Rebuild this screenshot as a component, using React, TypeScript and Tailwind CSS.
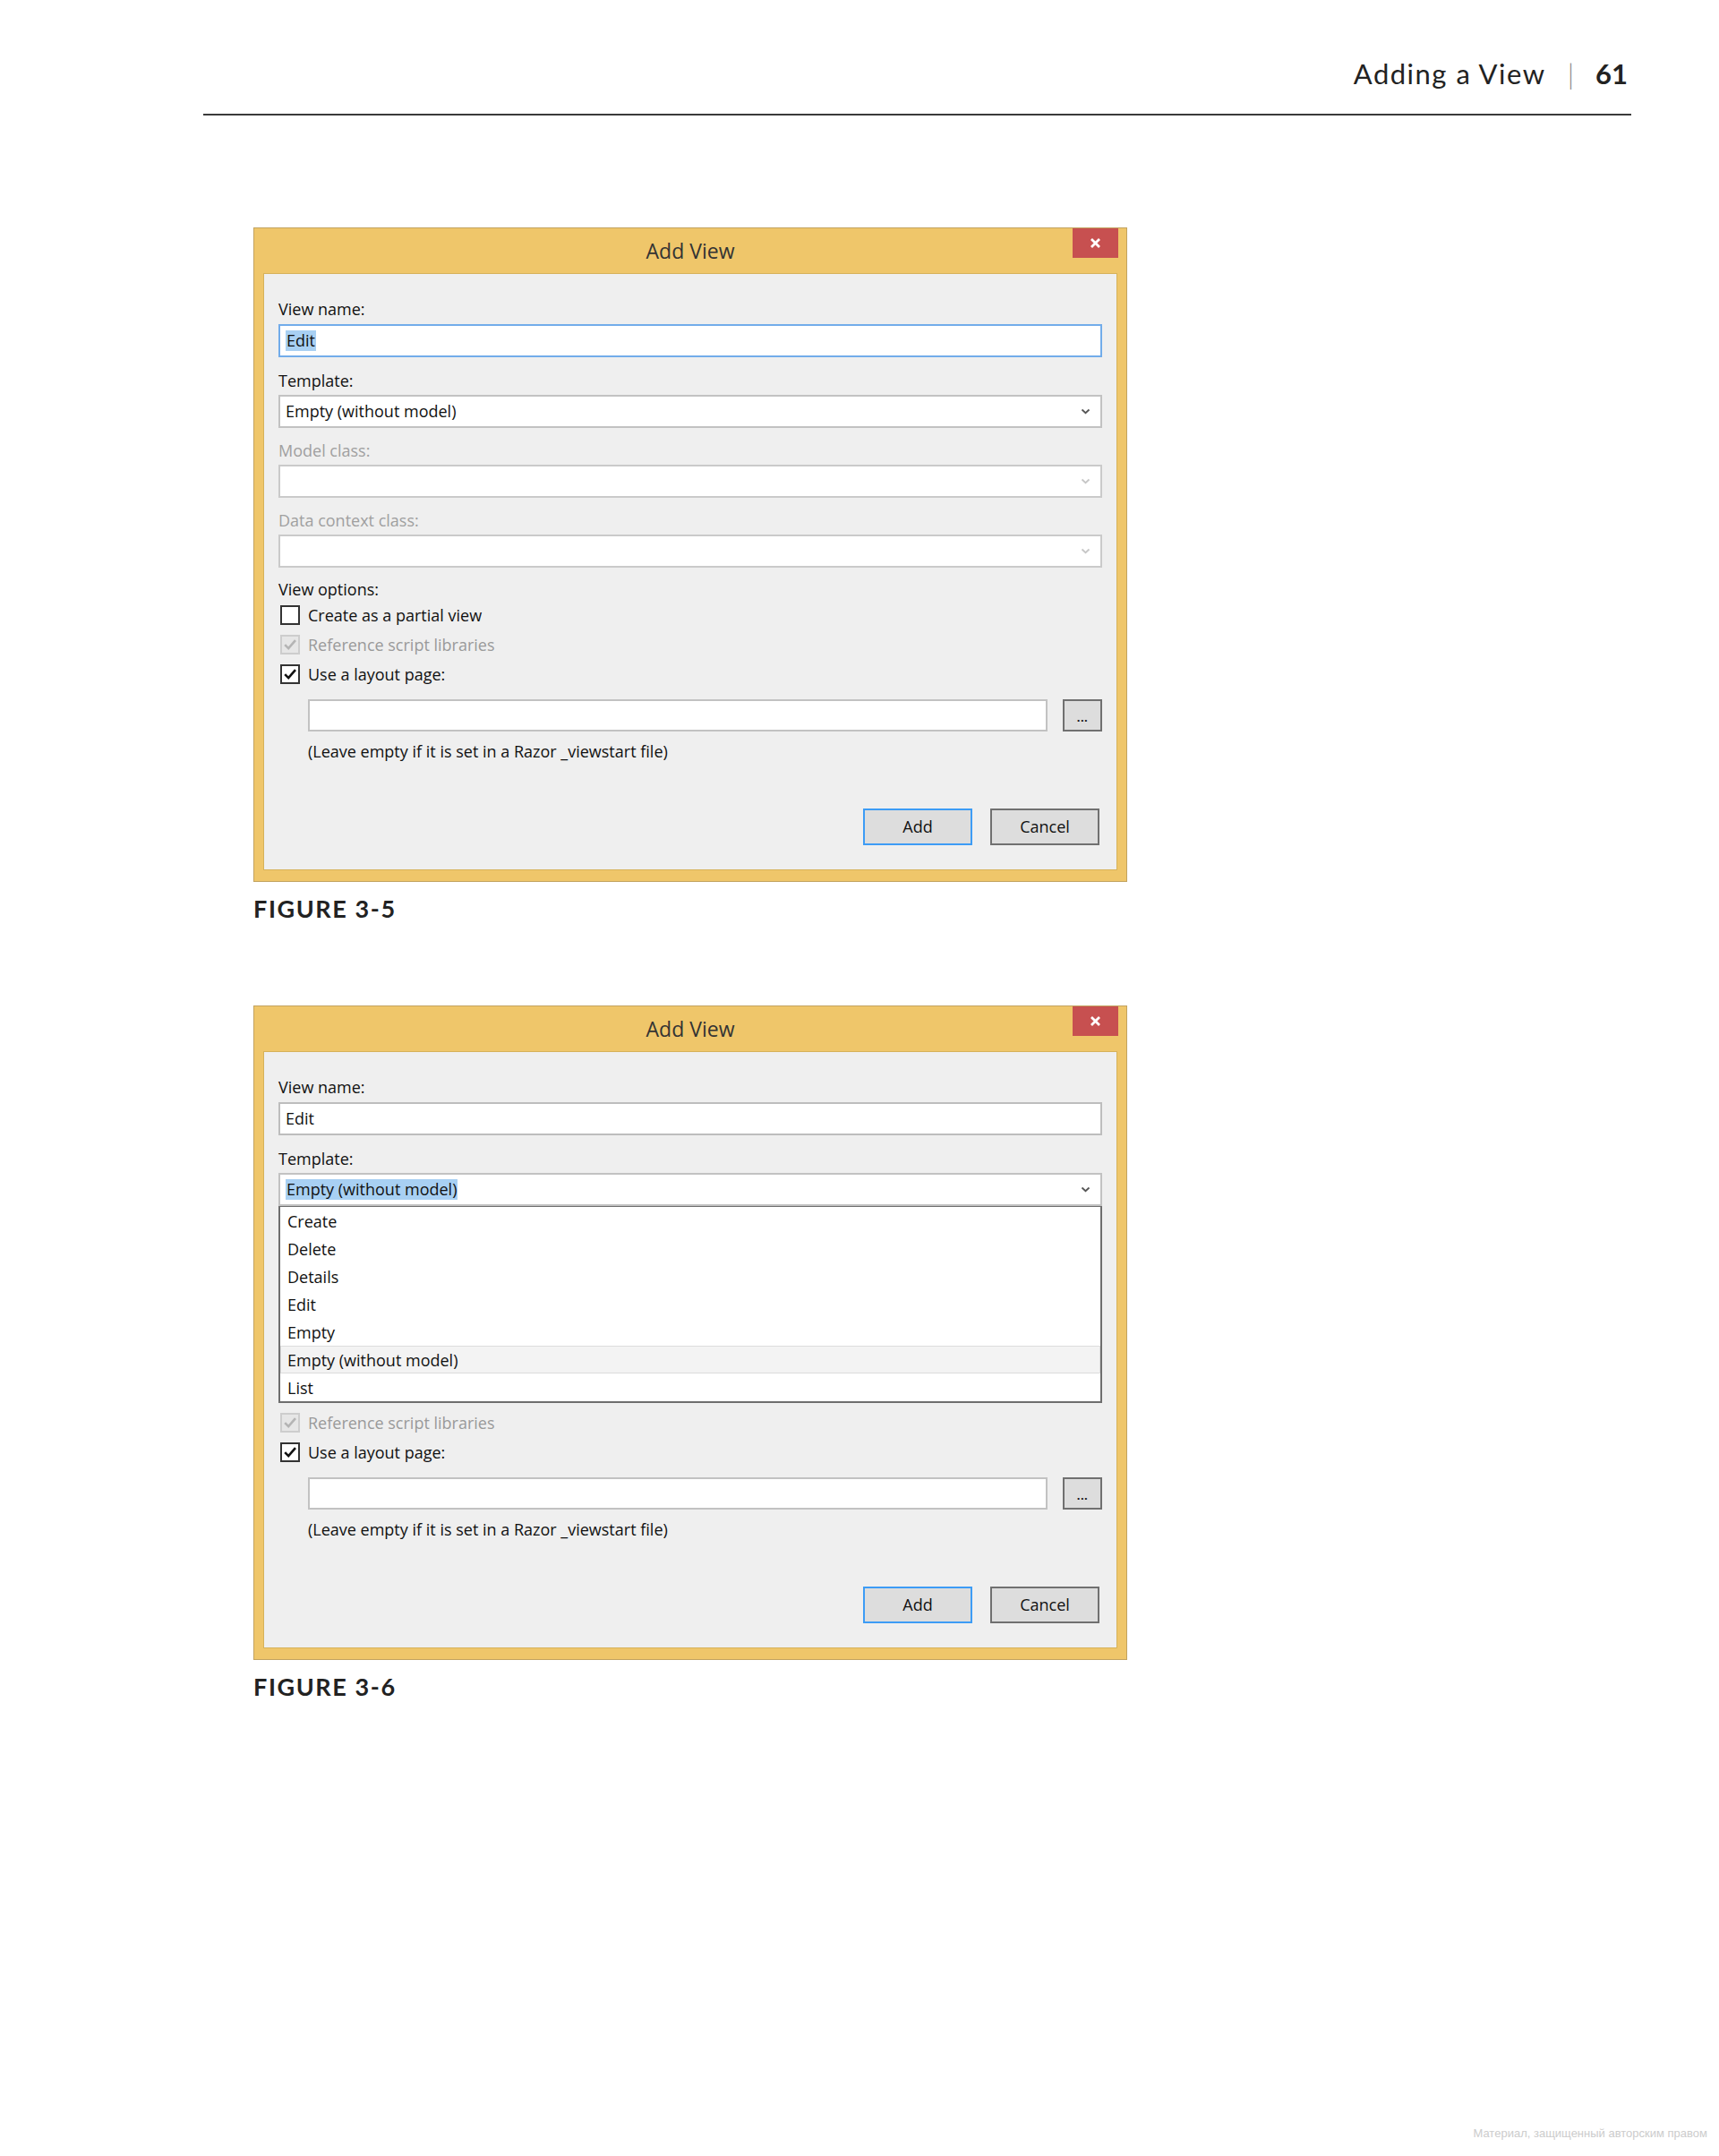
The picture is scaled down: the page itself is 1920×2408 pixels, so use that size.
import React from "react";

function Chevron({ light }: { light?: boolean }) {
  return (
    <svg width="11" height="7" viewBox="0 0 11 7" className="shrink-0">
      <path
        d="M1.5 1.5 L5.5 5.2 L9.5 1.5"
        fill="none"
        stroke={light ? "#c6c6c6" : "#555555"}
        strokeWidth="1.8"
      />
    </svg>
  );
}

function CheckMark({ color }: { color: string }) {
  return (
    <svg width="16" height="14" viewBox="0 0 16 14">
      <path d="M2.2 7.2 L6.2 11.2 L14 2.2" fill="none" stroke={color} strokeWidth="2.6" />
    </svg>
  );
}

type CbState = "unchecked" | "checked" | "disabled";

function CheckRow({ state, label, hidden }: { state: CbState; label: string; hidden?: boolean }) {
  const box =
    state === "disabled"
      ? "border-[#cdcdcd] bg-[#e6e6e6]"
      : "border-[#333333] bg-white";
  return (
    <div className={`flex items-center h-[33px] ${hidden ? "invisible" : ""}`}>
      <div className={`ml-[2px] w-[22px] h-[22px] border-2 flex items-center justify-center ${box}`}>
        {state === "checked" && <CheckMark color="#111111" />}
        {state === "disabled" && <CheckMark color="#b4b4b4" />}
      </div>
      <span
        className={`ml-[9px] leading-[24px] ${state === "disabled" ? "text-[#9a9a9a]" : "text-[#111111]"}`}
      >
        {label}
      </span>
    </div>
  );
}

const listItems = ["Create", "Delete", "Details", "Edit", "Empty", "Empty (without model)", "List"];

function Dialog({ open }: { open: boolean }) {
  const covered = open ? "invisible" : "";
  return (
    <div className="w-[976px] border border-[#c2a35f] bg-[#efc66a] relative">
      <div className="h-[50px] flex items-center justify-center relative">
        <span className="font-['Open_Sans',sans-serif] text-[23px] text-[#333333] leading-[30px]">Add View</span>
        <div className="absolute top-0 right-[9px] w-[51px] h-[33px] bg-[#c75050] flex items-center justify-center">
          <svg width="13" height="13" viewBox="0 0 13 13">
            <path d="M2 2 L11 11 M11 2 L2 11" stroke="#ffffff" strokeWidth="2.8" />
          </svg>
        </div>
      </div>
      <div className="mx-[10px] mb-[12px] border border-[#d6b25a] bg-[#efefef] px-[16px] pt-[27px] pb-[27px] font-['Open_Sans',sans-serif] text-[18px] text-[#111111]">
        <div className="h-[24px] leading-[24px]">View name:</div>
        <div
          className={`mt-[5px] h-[37px] bg-white border-2 flex items-center pl-[6px] ${
            open ? "border-[#bdbdbd]" : "border-[#72acea]"
          }`}
        >
          <span className={`leading-[23px] ${open ? "" : "bg-[#a8d0f3] px-[1px]"}`}>Edit</span>
        </div>

        <div className="mt-[14px] h-[24px] leading-[24px]">Template:</div>
        <div className="relative mt-[4px]">
          <div className="h-[37px] bg-white border-2 border-[#c2c2c2] flex items-center justify-between pl-[6px] pr-[11px]">
            <span className={`leading-[23px] ${open ? "bg-[#a8d0f3] px-[1px]" : ""}`}>Empty (without model)</span>
            <Chevron />
          </div>
          {open && (
            <div className="absolute left-0 right-0 top-full z-10 bg-white border-x-2 border-b-2 border-t border-[#6e6e6e]">
              {listItems.map((item, i) => (
                <div
                  key={item}
                  className={`h-[31px] flex items-center pl-[7px] border ${
                    i === 5 ? "bg-[#f3f3f3] border-[#dcdcdc]" : "border-transparent"
                  }`}
                >
                  <span className="leading-[24px]">{item}</span>
                </div>
              ))}
            </div>
          )}
        </div>

        <div className={`mt-[13px] h-[24px] leading-[24px] text-[#a0a0a0] ${covered}`}>Model class:</div>
        <div className={`mt-[4px] h-[37px] bg-white border-2 border-[#cacaca] flex items-center justify-end pr-[11px] ${covered}`}>
          <Chevron light />
        </div>

        <div className={`mt-[13px] h-[24px] leading-[24px] text-[#a0a0a0] ${covered}`}>Data context class:</div>
        <div className={`mt-[4px] h-[37px] bg-white border-2 border-[#cacaca] flex items-center justify-end pr-[11px] ${covered}`}>
          <Chevron light />
        </div>

        <div className={`mt-[12px] h-[24px] leading-[24px] ${covered}`}>View options:</div>
        <div className="flex flex-col">
          <CheckRow state="unchecked" label="Create as a partial view" hidden={open} />
          <CheckRow state="disabled" label="Reference script libraries" />
          <CheckRow state="checked" label="Use a layout page:" />
        </div>

        <div className="mt-[12px] ml-[33px] flex items-center gap-[17px]">
          <div className="flex-1 h-[36px] bg-white border-2 border-[#c2c2c2]" />
          <div className="w-[44px] h-[36px] border-2 border-[#707070] bg-[#dddddd] flex items-center justify-center">
            <span className="text-[13px] leading-[13px] font-bold mt-[4px] tracking-[0.5px]">...</span>
          </div>
        </div>
        <div className="mt-[10px] ml-[33px] h-[24px] leading-[24px]">
          (Leave empty if it is set in a Razor _viewstart file)
        </div>

        <div className="mt-[52px] flex justify-end gap-[20px] pr-[3px]">
          <div className="w-[122px] h-[41px] border-2 border-[#3d9cf5] bg-[#dddddd] flex items-center justify-center">
            Add
          </div>
          <div className="w-[122px] h-[41px] border-2 border-[#707070] bg-[#dddddd] flex items-center justify-center">
            Cancel
          </div>
        </div>
      </div>
    </div>
  );
}

function FigureLabel({ text }: { text: string }) {
  return (
    <div className="mt-[14px] font-['Lato',sans-serif] font-bold text-[27px] leading-[32px] tracking-[1.6px] text-[#222222]">
      {text}
    </div>
  );
}

export default function App() {
  return (
    <div className="relative w-[1920px] h-[2408px] bg-white">
      <header className="ml-[227px] w-[1595px] pt-[64px] pb-[26px] border-b-2 border-[#3a3a3a]">
        <div className="flex justify-end items-baseline pr-[4px] font-['Lato',sans-serif] text-[31px] leading-[37px] text-[#222222]">
          <span className="tracking-[1.5px]">Adding a View</span>
          <span className="mx-[24px] text-[#8a8a8a] font-light">|</span>
          <span className="font-bold">61</span>
        </div>
      </header>

      <main className="ml-[283px] mt-[125px] flex flex-col items-start">
        <Dialog open={false} />
        <FigureLabel text="FIGURE 3-5" />
        <div className="mt-[92px]">
          <Dialog open={true} />
        </div>
        <FigureLabel text="FIGURE 3-6" />
      </main>

      <div className="absolute right-[13px] bottom-[17px] font-['Liberation_Sans',Arial,sans-serif] text-[13px] leading-[16px] text-[#cccccc]">
        Материал, защищенный авторским правом
      </div>
    </div>
  );
}
